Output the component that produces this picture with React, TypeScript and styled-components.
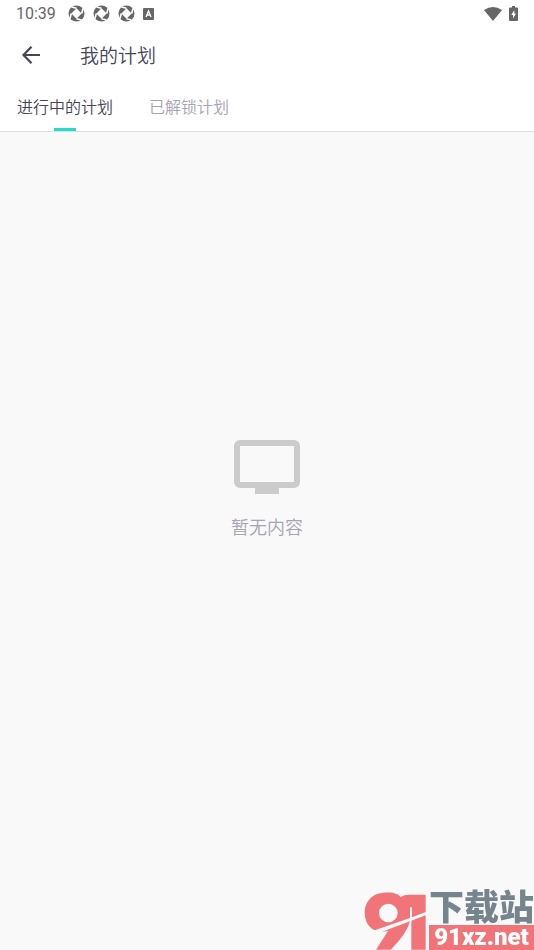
import React, { useState } from "react";
import styled, { createGlobalStyle } from "styled-components";

const Global = createGlobalStyle`
  * { box-sizing: border-box; }
  body { margin: 0; background: #f9f9f9; font-family: Roboto, "Noto Sans CJK SC", sans-serif; }
  button { font: inherit; border: 0; padding: 0; background: none; cursor: pointer; }
`;

const Screen = styled.div`
  min-height: 100vh;
  display: flex;
  flex-direction: column;
`;

const Header = styled.header`
  background: #fff;
  border-bottom: 1px solid #dedede;
`;

const StatusBar = styled.div`
  height: 27px;
  padding: 0 16px;
  display: flex;
  align-items: center;
  justify-content: space-between;
  color: #666;
`;

const StatusGroup = styled.div<{ $gap: number }>`
  display: flex;
  align-items: center;
  gap: ${(p) => p.$gap}px;
`;

const Clock = styled.time`
  font-size: 16px;
  line-height: 28px;
  margin-right: 4px;
`;

const TitleBar = styled.div`
  height: 56px;
  padding: 0 20px;
  display: flex;
  align-items: center;
  gap: 38px;
`;

const BackButton = styled.button`
  display: flex;
  color: #47455a;
`;

const Title = styled.h1`
  margin: 0;
  padding-top: 4px;
  font-size: 19px;
  line-height: 28px;
  font-weight: 350;
  color: #47455a;
`;

const Tabs = styled.div`
  height: 48px;
  padding: 0 17px;
  display: flex;
  gap: 36px;
`;

const Tab = styled.button<{ $active: boolean }>`
  display: flex;
  flex-direction: column;
  align-items: center;
  justify-content: space-between;
  && {
    padding-top: 13px;
    font-size: 16px;
    line-height: 24px;
    font-weight: 350;
    color: ${(p) => (p.$active ? "#47455a" : "#a5a3b4")};
  }
  &::after {
    content: "";
    width: 22px;
    height: 3px;
    background: ${(p) => (p.$active ? "#26dcc8" : "transparent")};
  }
`;

const Empty = styled.main`
  flex: 1;
  display: flex;
  flex-direction: column;
  align-items: center;
  justify-content: center;
  gap: 20px;
  padding-bottom: 101px;
`;

const EmptyText = styled.p`
  margin: 0;
  font-size: 18px;
  line-height: 28px;
  font-weight: 350;
  color: #a5a3b4;
`;

const Watermark = styled.div`
  position: fixed;
  right: 0;
  bottom: 0;
  display: flex;
  align-items: flex-end;
  gap: 3px;
`;

const SiteText = styled.div`
  display: flex;
  flex-direction: column;
`;

const SiteName = styled.span`
  font-family: "Noto Sans CJK SC", sans-serif;
  font-size: 35px;
  line-height: 40px;
  font-weight: 900;
  color: #76858d;
`;

const SiteUrl = styled.span`
  background: #f07478;
  color: #fff;
  font-family: Roboto, sans-serif;
  font-size: 24px;
  line-height: 25px;
  font-weight: 900;
  text-align: center;
`;

const Shutter = () => (
  <svg width="17" height="17" viewBox="0 0 17 17" aria-hidden="true">
    <circle cx="8.5" cy="8.5" r="8" fill="#666" />
    <path d="M8.5 3.3 13.7 8.5 8.5 13.7 3.3 8.5Z" fill="#fff" />
    <path d="M8.5 3.3 3.5 2M13.7 8.5 15 3.5M8.5 13.7 13.5 15M3.3 8.5 2 13.5" stroke="#fff" strokeWidth="1.6" />
  </svg>
);

const KeyboardMode = () => (
  <svg width="11" height="12" viewBox="0 0 11 12" aria-hidden="true">
    <rect width="11" height="12" rx="1" fill="#666" />
    <path d="M3 9 5.5 3 8 9M4 7h3" fill="none" stroke="#fff" strokeWidth="1.3" />
  </svg>
);

const Wifi = () => (
  <svg width="18" height="14" viewBox="0 0 18 14" aria-hidden="true">
    <path d="M9 14 0 3Q9-3 18 3Z" fill="#666" />
  </svg>
);

const Battery = () => (
  <svg width="9" height="15" viewBox="0 0 9 15" aria-hidden="true">
    <path d="M3 0h3v1.5h2q1 0 1 1V14q0 1-1 1H1q-1 0-1-1V2.5q0-1 1-1h2Z" fill="#666" />
    <path d="M5.3 4 2.3 9H4v3.5L7 7.5H5.3Z" fill="#fff" />
  </svg>
);

const BackArrow = () => (
  <svg width="22" height="22" viewBox="0 0 22 22" aria-hidden="true">
    <path d="M20 11H4M11.5 2.8 3.5 11l8 8.2" fill="none" stroke="currentColor" strokeWidth="2.2" />
  </svg>
);

const Monitor = () => (
  <svg width="66" height="54" viewBox="0 0 66 54" aria-hidden="true">
    <rect x="3" y="3" width="60" height="42" rx="3" fill="none" stroke="#cbcbcb" strokeWidth="6" />
    <path d="M21 47h24v7H21z" fill="#cbcbcb" />
  </svg>
);

const SiteMark = () => (
  <svg width="62" height="58" viewBox="30 34 186 174" aria-hidden="true">
    <path
      fill="#f07478"
      fillRule="evenodd"
      d="M62 149C18 128 20 44 84 37 114 33 130 38 140 49Q150 42 166 42H215V94L174 110V80H168V112L62 149ZM103 69A28 28 0 1 0 103 125A28 28 0 1 0 103 69Z"
    />
    <path fill="#f07478" d="M172 120 215 104V207H172ZM84 153 168 122Q158 160 110 207H66L102 151Z" />
  </svg>
);

export default function App() {
  const [tab, setTab] = useState(0);
  return (
    <>
      <Global />
      <Screen>
        <Header>
          <StatusBar>
            <StatusGroup $gap={8}>
              <Clock>10:39</Clock>
              <Shutter />
              <Shutter />
              <Shutter />
              <KeyboardMode />
            </StatusGroup>
            <StatusGroup $gap={7}>
              <Wifi />
              <Battery />
            </StatusGroup>
          </StatusBar>
          <TitleBar>
            <BackButton aria-label="返回"><BackArrow /></BackButton>
            <Title>我的计划</Title>
          </TitleBar>
          <Tabs role="tablist">
            {["进行中的计划", "已解锁计划"].map((name, i) => (
              <Tab key={name} role="tab" aria-selected={tab === i} $active={tab === i} onClick={() => setTab(i)}>
                {name}
              </Tab>
            ))}
          </Tabs>
        </Header>
        <Empty>
          <Monitor />
          <EmptyText>暂无内容</EmptyText>
        </Empty>
        <Watermark>
          <SiteMark />
          <SiteText>
            <SiteName>下载站</SiteName>
            <SiteUrl>91xz.net</SiteUrl>
          </SiteText>
        </Watermark>
      </Screen>
    </>
  );
}
